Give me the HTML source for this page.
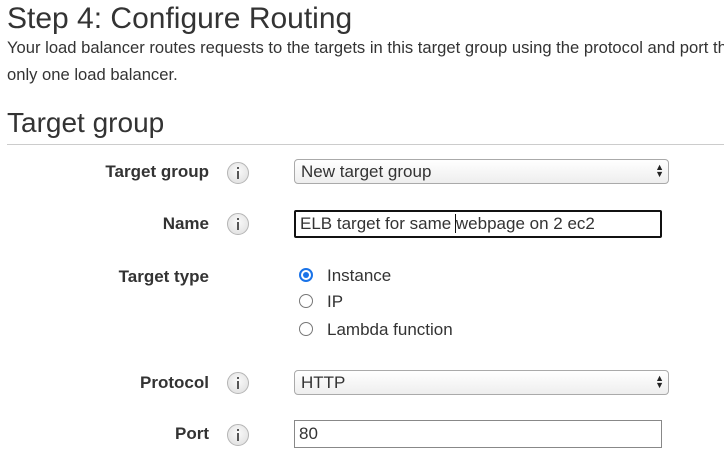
<!DOCTYPE html>
<html><head><style>
html,body{margin:0;width:724px;height:464px;overflow:hidden}
body{background:#fff;font-family:"Liberation Sans",Arial,sans-serif;color:#333;position:relative}
.a{position:absolute;white-space:nowrap}
.lbl{position:absolute;right:515px;font-weight:bold;font-size:17px;color:#333}
.info{position:absolute;left:227px;width:20px;height:20px;border:1px solid #b5b5b5;border-radius:50%;background:radial-gradient(circle at 50% 40%,#fafafa,#dcdcdc);box-sizing:content-box}
.info:after{content:"";position:absolute;left:9px;top:8px;width:2px;height:8px;background:#555}
.info:before{content:"";position:absolute;left:9px;top:4px;width:2px;height:2px;background:#555}
.sel{position:absolute;left:294px;width:375px;height:25px;border:1px solid #aaa;border-radius:4px;background:linear-gradient(#fff,#eee);box-sizing:border-box;font-size:17px;line-height:23px;padding-left:6px;color:#333}
.arr{position:absolute;right:4px;top:4px;font-size:9px;line-height:7px;color:#222}
.inp{position:absolute;left:294px;width:368px;box-sizing:border-box;font-size:17px;padding-left:4px;color:#333}
.rad{position:absolute;left:299px;width:14px;height:14px;border:1px solid #777;border-radius:50%;box-sizing:border-box;background:#fff}
.rt{position:absolute;left:327px;font-size:17px}
</style></head><body>
<div style="position:absolute;left:0;top:0;width:724px;height:464px;overflow:hidden">
<div class="a" style="left:7px;top:2px;font-size:30px;color:#333">Step 4: Configure Routing</div>
<div class="a" style="left:7px;top:38px;font-size:16.6px">Your load balancer routes requests to the targets in this target group using the protocol and port that you specify</div>
<div class="a" style="left:7px;top:65px;font-size:16.6px">only one load balancer.</div>
<div class="a" style="left:7px;top:107px;font-size:28px">Target group</div>
<div class="a" style="left:7px;top:144px;width:717px;height:1px;background:#ccc"></div>

<div class="lbl" style="top:162px">Target group</div><div class="info" style="top:162px"></div>
<div class="sel" style="top:159px">New target group<div class="arr">▲<br>▼</div></div>

<div class="lbl" style="top:214px">Name</div><div class="info" style="top:213px"></div>
<div class="inp" style="top:210px;height:28px;border:2px solid #111;border-radius:2px;line-height:24px">ELB target for same <span style="border-left:1px solid #111;margin-left:-1px"></span>webpage on 2 ec2</div>

<div class="lbl" style="top:267px">Target type</div>
<div class="rad" style="top:268px;border:2px solid #1a73e8"><div style="position:absolute;left:2px;top:2px;width:6px;height:6px;border-radius:50%;background:#1a73e8"></div></div>
<div class="rt" style="top:266px">Instance</div>
<div class="rad" style="top:294px"></div><div class="rt" style="top:292px">IP</div>
<div class="rad" style="top:322px"></div><div class="rt" style="top:320px">Lambda function</div>

<div class="lbl" style="top:373px">Protocol</div><div class="info" style="top:372px"></div>
<div class="sel" style="top:370px">HTTP<div class="arr">▲<br>▼</div></div>

<div class="lbl" style="top:424px">Port</div><div class="info" style="top:424px"></div>
<div class="inp" style="top:420px;height:28px;border:1px solid #888;line-height:26px">80</div>
</div>
</body></html>
